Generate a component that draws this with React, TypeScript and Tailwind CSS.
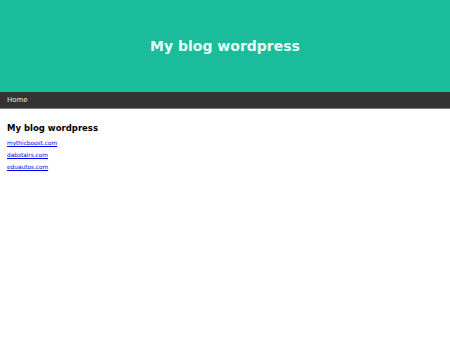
export default function App() {
  const links = ['mythicboost.com', 'dabstairs.com', 'eduautos.com']
  return (
    <div className="min-h-screen bg-white font-['DejaVu_Sans',sans-serif]">
      <header className="h-[92px] bg-[#1abc9c] flex items-center justify-center">
        <h1 className="text-[14px] font-bold text-[#e8fbf6]">My blog wordpress</h1>
      </header>
      <nav className="h-[17px] bg-[#333333] border-b border-[#7a7a7a] flex items-center px-[7px] pt-[1px]">
        <a className="text-[7px] text-[#e6e6e6]">Home</a>
      </nav>
      <main className="px-[7px] pt-[14px]">
        <h2 className="text-[8.5px] leading-[10px] font-bold text-black">My blog wordpress</h2>
        <ul className="mt-[7px] flex flex-col gap-[5px]">
          {links.map((l) => (
            <li key={l} className="text-[5.8px] leading-[7px]">
              <a href="#" className="text-[#0000ee] underline">{l}</a>
            </li>
          ))}
        </ul>
      </main>
    </div>
  )
}
